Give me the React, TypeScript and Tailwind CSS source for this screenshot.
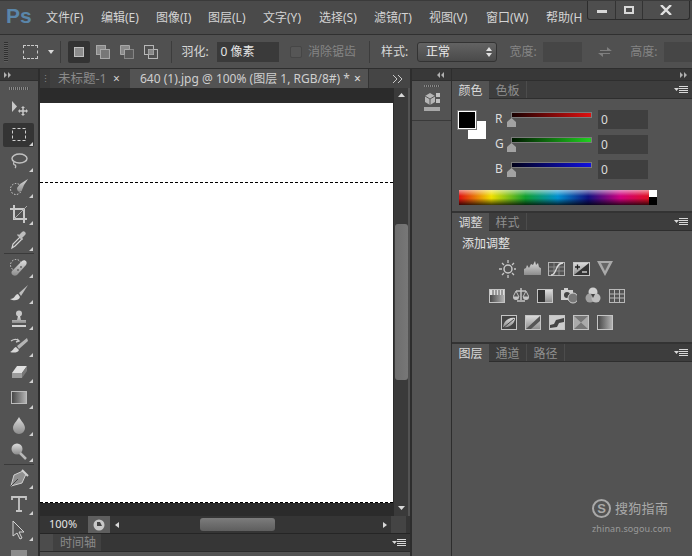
import React from "react";

const FONT = "font-['Noto_Sans','Noto_Sans_CJK_SC','Liberation_Sans',sans-serif]";

const menus: [string, string][] = [
  ["文件(F)", "w-[55px]"],
  ["编辑(E)", "w-[55px]"],
  ["图像(I)", "w-[52px]"],
  ["图层(L)", "w-[55px]"],
  ["文字(Y)", "w-[56px]"],
  ["选择(S)", "w-[55px]"],
  ["滤镜(T)", "w-[55px]"],
  ["视图(V)", "w-[57px]"],
  ["窗口(W)", "w-[60px]"],
  ["帮助(H)", "w-[36px]"],
];

function Grad({ id }: { id: string }) {
  return (
    <linearGradient id={id} x1="0" y1="0" x2="0" y2="1">
      <stop offset="0" stopColor="#dcdcdc" />
      <stop offset="1" stopColor="#8c8c8c" />
    </linearGradient>
  );
}

function Ico({ children, w = 20, h = 20 }: { children: React.ReactNode; w?: number; h?: number }) {
  return (
    <svg width={w} height={h} viewBox={`0 0 ${w} ${h}`} fill="none">
      <defs>
        <Grad id="g" />
        <linearGradient id="gh" x1="0" y1="0" x2="1" y2="0">
          <stop offset="0" stopColor="#444" />
          <stop offset="1" stopColor="#b5b5b5" />
        </linearGradient>
      </defs>
      {children}
    </svg>
  );
}

const tools: { icon: React.ReactNode; flag?: boolean; active?: boolean; sep?: boolean }[] = [
  {
    icon: (
      <>
        <path d="M3 3v11l5-5.500z" fill="#c8c8c8" />
        <path d="M14 9v8M10 13h8" stroke="#c8c8c8" strokeWidth="1.500" />
        <path d="M14 8l-2 2h4zM14 18l-2-2h4zM9 13l2-2v4zM19 13l-2-2v4z" fill="#c8c8c8" />
      </>
    ),
  },
  {
    icon: <rect x="3.500" y="3.500" width="13" height="12" stroke="#cfcfcf" strokeDasharray="3 2" />,
    flag: true,
    active: true,
  },
  {
    icon: (
      <>
        <ellipse cx="10.500" cy="7.500" rx="7.500" ry="4.500" stroke="#c0c0c0" strokeWidth="1.500" />
        <path d="M5 11c-1 2 0 3 1 3s1 2 0 3" stroke="#c0c0c0" strokeWidth="1.300" />
      </>
    ),
    flag: true,
  },
  {
    icon: (
      <>
        <circle cx="7" cy="12" r="5.500" stroke="#d5d5d5" strokeDasharray="1.500 1.500" />
        <path d="M19 2L11 7l-3 4c0 4 3 5 5 2l2-5z" fill="url(#g)" />
      </>
    ),
    flag: true,
  },
  {
    icon: (
      <>
        <path d="M5 1v14h13M1 5h14v14" stroke="#c8c8c8" strokeWidth="2" />
        <path d="M5 15L18 2" stroke="#aaa" />
      </>
    ),
    flag: true,
  },
  {
    icon: (
      <>
        <path d="M3 18l1-4 7-7 2 2-7 7z" stroke="#d5d5d5" strokeWidth="1.200" />
        <path d="M10 5l3-3c1-1 2-1 3 0s1 2 0 3l-3 3 1 1-1 1-5-5 1-1z" fill="#bdbdbd" />
      </>
    ),
    flag: true,
    sep: true,
  },
  {
    icon: (
      <>
        <circle cx="7" cy="8" r="5.500" stroke="#d0d0d0" strokeDasharray="1.500 1.500" />
        <path d="M3 14L13 4c3-2 6 1 4 4L8 18c-3 2-7-1-5-4z" fill="url(#g)" />
        <circle cx="9" cy="13" r="1" fill="#666" />
        <circle cx="12" cy="10" r="1" fill="#666" />
      </>
    ),
    flag: true,
  },
  {
    icon: (
      <>
        <path d="M19 2L10 10l2 3z" fill="#bdbdbd" />
        <path d="M9 11c-3 0-3 5-8 5 3 2 9 2 10-2z" fill="#d8d8d8" />
      </>
    ),
    flag: true,
  },
  {
    icon: (
      <>
        <circle cx="10" cy="4.500" r="3" fill="#c8c8c8" />
        <path d="M9 7h2l1 4h5v3H3v-3h5z" fill="url(#g)" />
        <rect x="3" y="16" width="14" height="2" fill="#d2d2d2" />
      </>
    ),
    flag: true,
  },
  {
    icon: (
      <>
        <path d="M18 2L8 10l2 3 9-8z" fill="#b5b5b5" />
        <path d="M7 11c-2 0-3 4-6 5 3 1 8 1 9-2z" fill="#d8d8d8" />
        <path d="M2 5c3-2 6-2 8 0M8 3l2 2-3 1" stroke="#c8c8c8" strokeWidth="1.400" />
      </>
    ),
    flag: true,
  },
  {
    icon: (
      <>
        <path d="M8 4h10l-5 7H3z" fill="#e0e0e0" />
        <path d="M3 11h10v5H3z" fill="#9b9b9b" />
        <path d="M13 11l5-7v5l-5 7z" fill="#777" />
      </>
    ),
    flag: true,
  },
  {
    icon: <rect x="2.500" y="3.500" width="15" height="12" fill="url(#gh)" stroke="#bbb" />,
    flag: true,
  },
  {
    icon: <path d="M10 2c-2 4-6 7-6 11a6 6 0 0012 0c0-4-4-7-6-11z" fill="url(#g)" />,
    flag: true,
  },
  {
    icon: (
      <>
        <circle cx="8" cy="8" r="5.500" fill="url(#g)" />
        <path d="M11 12l6 6" stroke="#b8b8b8" strokeWidth="2.500" />
      </>
    ),
    flag: true,
    sep: true,
  },
  {
    icon: (
      <>
        <path d="M14 3l-9 4-3 11 11-3 4-9z" fill="#8f8f8f" stroke="#d0d0d0" />
        <path d="M2 18l7-7" stroke="#444" />
        <path d="M13 2l6 6" stroke="#d0d0d0" strokeWidth="2" />
      </>
    ),
    flag: true,
  },
  {
    icon: <path d="M3 6V3h14v3M10 3v14M7 17h6" stroke="#c4c4c4" strokeWidth="1.800" />,
    flag: true,
  },
  {
    icon: <path d="M4 1v15l4-3 3 6 2-1-3-6h5z" fill="#555" stroke="#d4d4d4" />,
    flag: true,
  },
  {
    icon: <rect x="2" y="3" width="16" height="14" fill="#8c8c8c" />,
  },
];

const adj1 = [
  <>
    <circle cx="9" cy="9" r="4" stroke="#c8c8c8" strokeWidth="1.500" />
    <path d="M9 0v3M9 15v3M0 9h3M15 9h3M3 3l2 2M13 13l2 2M15 3l-2 2M5 13l-2 2" stroke="#c8c8c8" strokeWidth="1.300" />
  </>,
  <path d="M0 15V9l2-1 1-3 2 3 2-4 2 1 2-4 1 4 2-2 1 4 3 2v6z" fill="url(#g)" />,
  <>
    <rect x=".5" y="2.500" width="16" height="13" stroke="#b5b5b5" />
    <path d="M6 3v12M11 3v12M1 7h15M1 11h15" stroke="#8a8a8a" />
    <path d="M3 15c6 0 4-12 12-12" stroke="#ddd" strokeWidth="1.300" />
  </>,
  <>
    <rect x=".5" y="2.500" width="16" height="13" fill="url(#g)" stroke="#c5c5c5" />
    <path d="M1 15L16 3v12z" fill="#333" />
    <path d="M2 7h5M4.500 4.500v5" stroke="#222" strokeWidth="1.300" />
    <path d="M9 12h5" stroke="#ddd" strokeWidth="1.300" />
  </>,
  <>
    <path d="M0 1h16L8 16z" fill="#a9a9a9" />
    <path d="M4 3h8L8 11z" fill="#666" />
  </>,
];
const adj2 = [
  <>
    <rect x=".5" y="2.500" width="15" height="13" fill="url(#gh)" stroke="#c4c4c4" />
    <rect x="1" y="3" width="14" height="5" fill="#ddd" />
    <path d="M4 3v5M7 3v5M10 3v5M13 3v5" stroke="#555" />
  </>,
  <>
    <path d="M8 1v12M3 4h10M4 14h8" stroke="#c4c4c4" strokeWidth="1.500" />
    <path d="M3 4l-3 6h6zM13 4l-3 6h6z" stroke="#c4c4c4" />
    <path d="M0 10a3 3 0 006 0zM10 10a3 3 0 006 0z" fill="#c4c4c4" />
  </>,
  <>
    <rect x=".5" y="2.500" width="15" height="13" fill="#333" stroke="#c4c4c4" />
    <rect x="8" y="3" width="7" height="12" fill="url(#g)" />
  </>,
  <>
    <rect x="0" y="3" width="12" height="10" fill="#cfcfcf" />
    <rect x="3" y="1" width="4" height="3" fill="#cfcfcf" />
    <circle cx="6" cy="8" r="3" fill="#444" />
    <circle cx="12" cy="11" r="5" fill="#777" stroke="#cfcfcf" />
  </>,
  <>
    <circle cx="8" cy="5" r="4.500" fill="#d0d0d0" />
    <circle cx="5" cy="11" r="4.500" fill="#a0a0a0" />
    <circle cx="11" cy="11" r="4.500" fill="#bdbdbd" />
    <path d="M6 7h4l-2 4z" fill="#444" />
  </>,
  <>
    <rect x=".5" y="2.500" width="15" height="13" stroke="#b8b8b8" />
    <path d="M5.500 3v12M10.500 3v12M1 7h14M1 11h14" stroke="#b8b8b8" />
  </>,
];
const adj3 = [
  <>
    <rect x=".5" y="1.500" width="15" height="14" fill="#444" stroke="#c4c4c4" />
    <path d="M2 13C3 6 9 3 14 4c0 6-6 10-12 9z" fill="url(#g)" />
    <path d="M2 14L13 5" stroke="#444" />
  </>,
  <>
    <rect x=".5" y="1.500" width="15" height="14" fill="url(#g)" stroke="#c4c4c4" />
    <path d="M1 15L15 2v5L6 15z" fill="#555" />
  </>,
  <>
    <rect x=".5" y="1.500" width="15" height="14" fill="#ccc" stroke="#c4c4c4" />
    <path d="M1 11l4-1 2-4 8-2v4l-5 1-2 4-7 1z" fill="#444" />
  </>,
  <>
    <rect x=".5" y="1.500" width="15" height="14" fill="#777" stroke="#c4c4c4" />
    <path d="M1 2l7 6.500L1 15zM15 2L8 8.500l7 6.500z" fill="#aaa" />
  </>,
  <rect x=".5" y="1.500" width="15" height="14" fill="url(#gh)" stroke="#c4c4c4" />,
];

function PanelMenu() {
  return (
    <svg width="14" height="8" viewBox="0 0 14 8" fill="none" className="ml-auto mr-[4px]">
      <path d="M0 2h5L2.500 5z" fill="#d8d8d8" />
      <path d="M5 .5h9M5 2.500h9M5 4.500h9M5 6.500h9" stroke="#d8d8d8" />
    </svg>
  );
}

function Slider({ color, label, from }: { color: string; label: string; from: string }) {
  return (
    <div className="flex items-start h-[25px] pl-[43px]">
      <span className="w-[15px] text-[12px] leading-[16px] text-[#dcdcdc] pt-[1px]">{label}</span>
      <div className="w-[1px]" />
      <div className="relative w-[81px] h-[6px] mt-[2px] border border-[#7a7a7a]" style={{ background: `linear-gradient(to right, ${from}, ${color})` }}>
        <svg width="11" height="9" viewBox="0 0 11 9" className="absolute left-[-6px] top-[5px]">
          <path d="M5.500 0L10 4v5H1V4z" fill="#a2a2a2" />
        </svg>
      </div>
      <div className="ml-[6px] w-[50px] h-[19px] bg-[#3f3f3f] text-[#dcdcdc] text-[12px] leading-[19px] pl-[3px]">0</div>
    </div>
  );
}

function PanelTabs({ tabs }: { tabs: string[] }) {
  return (
    <div className="flex items-center h-[18px] bg-[#3d3d3d] border-b border-[#2e2e2e] shrink-0">
      {tabs.map((t, i) => (
        <div
          key={t}
          className={
            i === 0
              ? "h-[18px] w-[37px] bg-[#535353] text-[#dadada] text-[12px] leading-[20px] text-center"
              : "h-[17px] w-[38px] border-r border-[#4c4c4c] text-[#8f8f8f] text-[12px] leading-[19px] text-center"
          }
        >
          {t}
        </div>
      ))}
      <PanelMenu />
    </div>
  );
}

export default function App() {
  return (
    <div className={`${FONT} relative w-[692px] h-[556px] overflow-hidden flex flex-col bg-[#535353] text-[12px]`}>
      {/* Menu bar */}
      <div className="h-[35px] shrink-0 flex items-start bg-[#4a4a4a] border-t border-t-[#3a3a3a] border-b border-b-[#303030] relative">
        <div className="w-[46px] pl-[6px] pt-[2px] font-['Liberation_Sans',sans-serif] font-bold text-[21px] leading-[26px] text-[#5a86aa]">Ps</div>
        <div className="flex h-[33px] pt-[1px] items-center w-[539px] overflow-hidden whitespace-nowrap">
          {menus.map(([m, w]) => (
            <span key={m} className={`${w} shrink-0 overflow-hidden text-[#d4d4d4] text-[12px]`}>
              {m}
            </span>
          ))}
        </div>
        <div className="ml-[2px] flex h-[19px] w-[103px] border border-t-0 border-[#2c2c2c] rounded-b-[3px] bg-[#4e4e4e]">
          <div className="w-[28px] flex items-center justify-center border-r border-[#333]">
            <div className="w-[10px] h-[3px] mt-[2px] bg-[#d8d8d8]" />
          </div>
          <div className="w-[27px] flex items-center justify-center border-r border-[#333]">
            <div className="w-[10px] h-[8px] border-2 border-[#d8d8d8]" />
          </div>
          <div className="flex-1 flex items-center justify-center">
            <svg width="12" height="10" viewBox="0 0 12 10">
              <path d="M1 0l10 10M11 0L1 10" stroke="#e0e0e0" strokeWidth="2.400" />
            </svg>
          </div>
        </div>
      </div>

      {/* Options bar */}
      <div className="h-[34px] shrink-0 flex items-center bg-[#505050] border-b border-[#2e2e2e] text-[#d8d8d8] whitespace-nowrap overflow-hidden">
        <div className="ml-[4px] w-[4px] h-[20px] bg-[repeating-linear-gradient(to_bottom,#2f2f2f_0,#2f2f2f_1px,#5d5d5d_1px,#5d5d5d_2px)]" />
        <div className="ml-[15px] w-[15px] h-[14px] border border-dashed border-[#c8c8c8]" />
        <svg width="6" height="4" viewBox="0 0 6 4" className="ml-[10px]">
          <path d="M0 0h6L3 4z" fill="#d8d8d8" />
        </svg>
        <div className="ml-[6px] w-px h-[22px] bg-[#3c3c3c]" />
        <div className="ml-[7px] w-[22px] h-[22px] bg-[#333] rounded-[2px] flex items-center justify-center">
          <div className="w-[10px] h-[10px] bg-[#8c8c8c] border border-[#c0c0c0]" />
        </div>
        <svg width="14" height="14" viewBox="0 0 14 14" fill="none" className="ml-[6px]">
          <rect x=".5" y=".5" width="9" height="9" fill="#8a8a8a" stroke="#aaa" />
          <rect x="4.500" y="4.500" width="9" height="9" fill="#777" stroke="#aaa" />
        </svg>
        <svg width="14" height="14" viewBox="0 0 14 14" fill="none" className="ml-[10px]">
          <rect x="4.500" y="4.500" width="9" height="9" fill="#5a5a5a" stroke="#888" />
          <path d="M.5 9.500v-9h9v4h-5v5z" fill="#8a8a8a" stroke="#aaa" />
        </svg>
        <svg width="14" height="14" viewBox="0 0 14 14" fill="none" className="ml-[10px]">
          <rect x=".5" y=".5" width="9" height="9" stroke="#bbb" />
          <rect x="4.500" y="4.500" width="9" height="9" stroke="#bbb" />
          <rect x="4.500" y="4.500" width="5" height="5" fill="#888" />
        </svg>
        <div className="ml-[13px] w-px h-[22px] bg-[#3c3c3c]" />
        <span className="ml-[10px] w-[36px]">羽化:</span>
        <div className="w-[62px] h-[20px] bg-[#3a3a3a] pl-[3px] leading-[20px] text-[#e4e4e4]">0 像素</div>
        <div className="ml-[11px] w-[12px] h-[12px] bg-[#565656] border border-[#464646] rounded-[2px]" />
        <span className="ml-[6px] w-[48px] text-[#858585]">消除锯齿</span>
        <div className="ml-[13px] w-px h-[22px] bg-[#3c3c3c]" />
        <span className="ml-[11px] w-[36px]">样式:</span>
        <div className="w-[80px] h-[20px] flex items-center pl-[8px] pr-[4px] rounded-[3px] border border-[#333] bg-gradient-to-b from-[#636363] to-[#4a4a4a] text-[#e8e8e8]">
          正常
          <svg width="6" height="10" viewBox="0 0 6 10" className="ml-auto">
            <path d="M3 0l3 4H0zM3 10L0 6h6z" fill="#e0e0e0" />
          </svg>
        </div>
        <span className="ml-[13px] w-[34px] text-[#858585]">宽度:</span>
        <div className="w-[39px] h-[20px] bg-[#464646]" />
        <svg width="14" height="12" viewBox="0 0 14 12" className="ml-[16px]">
          <path d="M2 4h7V1l5 4H2zM12 8H5v3L0 7h12z" fill="#7f7f7f" />
        </svg>
        <span className="ml-[18px] w-[34px] text-[#858585]">高度:</span>
        <div className="w-[28px] h-[20px] bg-[#464646] shrink-0" />
      </div>

      {/* Main */}
      <div className="flex-1 flex min-h-0">
        {/* Toolbar */}
        <div className="w-[38px] shrink-0 flex flex-col overflow-hidden">
          <div className="h-[12px] shrink-0 bg-[#383838] border-b border-[#2e2e2e] flex items-center pl-[4px]">
            <svg width="8" height="6" viewBox="0 0 8 6">
              <path d="M0 0l3 3-3 3zM4 0l3 3-3 3z" fill="#b0b0b0" />
            </svg>
          </div>
          <div className="h-[14px] flex items-center justify-center shrink-0">
            <div className="w-[20px] h-[3px] bg-[repeating-linear-gradient(to_right,#888_0,#888_1px,#444_1px,#444_2px)]" />
          </div>
          {tools.map((t, i) => (
            <React.Fragment key={i}>
              <div className="pl-[3px] h-[26.400px] shrink-0 flex items-center">
                <div className={`relative w-[31px] h-[24px] flex items-center justify-center ${t.active ? "bg-[#343434] rounded-[2px]" : ""}`}>
                  <Ico>{t.icon}</Ico>
                  {t.flag && (
                    <svg width="4" height="4" viewBox="0 0 4 4" className="absolute right-[1px] bottom-[1px]">
                      <path d="M4 0v4H0z" fill="#d0d0d0" />
                    </svg>
                  )}
                </div>
              </div>
              {t.sep && <div className="mx-[4px] h-px -mb-px shrink-0 bg-[#3a3a3a]" />}
            </React.Fragment>
          ))}
        </div>
        <div className="w-[2px] shrink-0 bg-[#2d2d2d]" />

        {/* Document */}
        <div className="w-[370px] shrink-0 flex flex-col">
          <div className="h-[19px] shrink-0 flex bg-[#454545] whitespace-nowrap">
            <div className="w-[10px] bg-[#3a3a3a] flex items-center justify-center text-[#888] text-[9px]">⋮</div>
            <div className="w-[80px] h-[19px] bg-[#3f3f3f] flex items-center pl-[8px] pt-[1px] text-[#8a8a8a] text-[12.500px]">
              <span className="w-[55px] shrink-0">未标题-1</span>
              <span className="text-[#d0d0d0] text-[12px] leading-none">×</span>
            </div>
            <div className="w-[238px] bg-[#535353] flex items-center pl-[10px] pt-[1px] text-[#cfcfcf] text-[12px] overflow-hidden">
              <span className="w-[214px] shrink-0 overflow-hidden">640 (1).jpg @ 100% (图层 1, RGB/8#) *</span>
              <span className="text-[#e0e0e0] text-[12px] leading-none">×</span>
            </div>
            <div className="flex-1 flex items-center justify-end pr-[7px] border-l border-[#333]">
              <svg width="11" height="8" viewBox="0 0 11 8" fill="none">
                <path d="M1 0l4 4-4 4M6 0l4 4-4 4" stroke="#c8c8c8" />
              </svg>
            </div>
          </div>
          <div className="h-[428px] shrink-0 flex min-h-0">
            <div className="w-[353px] shrink-0 bg-[#2b2b2b] pt-[15px]">
              <div className="h-[400px] bg-white flex flex-col">
                <div className="h-[80px] border-b border-dashed border-black" />
                <div className="flex-1 border-b border-dashed border-black" />
              </div>
            </div>
            <div className="w-[1px] bg-[#2b2b2b]" />
            <div className="w-[14px] bg-[#3a3a3a] flex flex-col items-center">
              <svg width="7" height="4" viewBox="0 0 7 4" className="mt-[5px]">
                <path d="M3.500 0L7 4H0z" fill="#d8d8d8" />
              </svg>
              <div className="mt-[127px] w-[13px] h-[156px] rounded-[3px] bg-gradient-to-r from-[#6e6e6e] to-[#777]" />
              <svg width="7" height="4" viewBox="0 0 7 4" className="mt-[126px]">
                <path d="M3.500 4L7 0H0z" fill="#d8d8d8" />
              </svg>
            </div>
            <div className="w-[2px] bg-[#535353]" />
          </div>
          <div className="h-[17px] shrink-0 flex items-center bg-[#353535]">
            <span className="w-[48px] pl-[9px] text-[#e4e4e4] text-[11px]">100%</span>
            <div className="w-[22px] h-[17px] bg-[#5e5e5e] flex items-center justify-center">
              <svg width="12" height="12" viewBox="0 0 12 12">
                <circle cx="6" cy="6" r="5.500" fill="#c8c8c8" />
                <path d="M4 3h3l2 4H4z" fill="#444" />
              </svg>
            </div>
            <svg width="4" height="6" viewBox="0 0 4 6" className="ml-[5px]">
              <path d="M4 0v6L0 3z" fill="#d8d8d8" />
            </svg>
            <div className="ml-[81px] w-[75px] h-[13px] rounded-[3px] bg-gradient-to-b from-[#7c7c7c] to-[#5e5e5e]" />
            <svg width="4" height="6" viewBox="0 0 4 6" className="ml-[108px]">
              <path d="M0 0v6l4-3z" fill="#d8d8d8" />
            </svg>
            <div className="ml-[4px] w-[15px] h-[17px] bg-[#444]" />
          </div>
          <div className="h-[1px] shrink-0 bg-[#252525]" />
          <div className="h-[18px] shrink-0 flex items-center bg-[#363636] border-b border-[#2a2a2a]">
            <div className="w-[13px] h-full bg-[#4c4c4c]" />
            <div className="w-[48px] h-full bg-[#414141] text-[#8a8a8a] text-[12px] leading-[17px] pl-[7px]">时间轴</div>
            <PanelMenu />
          </div>
          <div className="h-[4px] shrink-0" />
        </div>
        <div className="w-[2px] shrink-0 bg-[#2d2d2d]" />

        {/* Dock */}
        <div className="w-[39px] shrink-0 flex flex-col">
          <div className="h-[12px] bg-[#383838] border-b border-[#2e2e2e] flex justify-end items-center pr-[6px]">
            <svg width="8" height="6" viewBox="0 0 8 6">
              <path d="M3 0L0 3l3 3zM7 0L4 3l3 3z" fill="#b0b0b0" />
            </svg>
          </div>
          <div className="h-[40px] border-b border-[#3a3a3a] flex flex-col items-center pt-[4px]">
            <div className="w-[16px] h-[2px] mb-[5px] bg-[repeating-linear-gradient(to_right,#888_0,#888_1px,#444_1px,#444_2px)]" />
            <svg width="16" height="20" viewBox="0 0 16 20">
              <path d="M1 4l5-3 5 3v6l-5 3-5-3z" fill="#b5b5b5" />
              <path d="M1 4l5 3 5-3M6 7v6" stroke="#555" fill="none" />
              <rect x="12" y="1" width="4" height="4" fill="#c0c0c0" />
              <rect x="12" y="7" width="4" height="4" fill="#c0c0c0" />
              <rect x="0" y="15" width="16" height="4" fill="#a8a8a8" />
            </svg>
          </div>
        </div>
        <div className="w-px shrink-0 bg-[#2d2d2d]" />

        {/* Panels */}
        <div className="flex-1 flex flex-col min-w-0">
          <div className="h-[12px] shrink-0 bg-[#383838] flex items-center justify-end pr-[4px] border-b border-[#2e2e2e]">
            <svg width="8" height="6" viewBox="0 0 8 6">
              <path d="M0 0l3 3-3 3zM4 0l3 3-3 3z" fill="#b0b0b0" />
            </svg>
          </div>
          <PanelTabs tabs={["颜色", "色板"]} />
          {/* Color */}
          <div className="relative h-[114px] shrink-0 border-b-2 border-[#333] pt-[11px]">
            <div className="absolute left-[16px] top-[22px] w-[18px] h-[18px] bg-white" />
            <div className="absolute left-[6px] top-[12px] w-[18px] h-[18px] bg-black border border-white outline outline-1 outline-[#777]" />
            <Slider label="R" color="#e01010" from="#180000" />
            <Slider label="G" color="#20d020" from="#001800" />
            <Slider label="B" color="#1010e0" from="#000018" />
            <div className="ml-[7px] mt-[5px] flex h-[15px] w-[198px]">
              <div className="w-[190px] h-[15px] relative bg-[linear-gradient(to_right,#e01010,#f0e000_17%,#10a030_35%,#0090d0_52%,#101080_68%,#d00080_85%,#e01020)]">
                <div className="absolute inset-0 bg-[linear-gradient(to_bottom,rgba(255,255,255,.55),transparent_40%,transparent_55%,rgba(0,0,0,.75))]" />
              </div>
              <div className="w-[8px] flex flex-col">
                <div className="h-[7px] bg-white" />
                <div className="h-[8px] bg-black" />
              </div>
            </div>
          </div>
          {/* Adjustments */}
          <PanelTabs tabs={["调整", "样式"]} />
          <div className="h-[113px] shrink-0 border-b-2 border-[#333] flex flex-col">
            <div className="pl-[10px] pt-[4px] h-[23px] text-[#e4e4e4] text-[12px] leading-[18px]">添加调整</div>
            <div className="flex flex-col items-start pt-[1px]">
              <div className="flex gap-[7.500px] h-[27px] items-center pl-[47px]">
                {adj1.map((a, i) => (
                  <Ico key={i} w={17} h={18}>{a}</Ico>
                ))}
              </div>
              <div className="flex gap-[8px] h-[27px] items-center pl-[37px]">
                {adj2.map((a, i) => (
                  <Ico key={i} w={16} h={18}>{a}</Ico>
                ))}
              </div>
              <div className="flex gap-[8px] h-[27px] items-center pl-[49px]">
                {adj3.map((a, i) => (
                  <Ico key={i} w={16} h={17}>{a}</Ico>
                ))}
              </div>
            </div>
          </div>
          {/* Layers */}
          <PanelTabs tabs={["图层", "通道", "路径"]} />
          <div className="flex-1" />
        </div>
      </div>

      {/* Watermark */}
      <div className="absolute left-[592px] top-[499px] flex flex-col items-start text-[#a9a9a9]">
        <div className="flex items-center">
          <div className="w-[19px] h-[19px] rounded-full border-2 border-[#a9a9a9] flex items-center justify-center font-['Liberation_Sans',sans-serif] font-bold text-[13px] leading-none">S</div>
          <span className="ml-[4px] text-[13px] leading-[19px] tracking-[.3px]">搜狗指南</span>
        </div>
        <span className="mt-[5px] text-[9px] leading-[12px] text-[#9a9a9a] tracking-[.1px]">zhinan.sogou.com</span>
      </div>
    </div>
  );
}
